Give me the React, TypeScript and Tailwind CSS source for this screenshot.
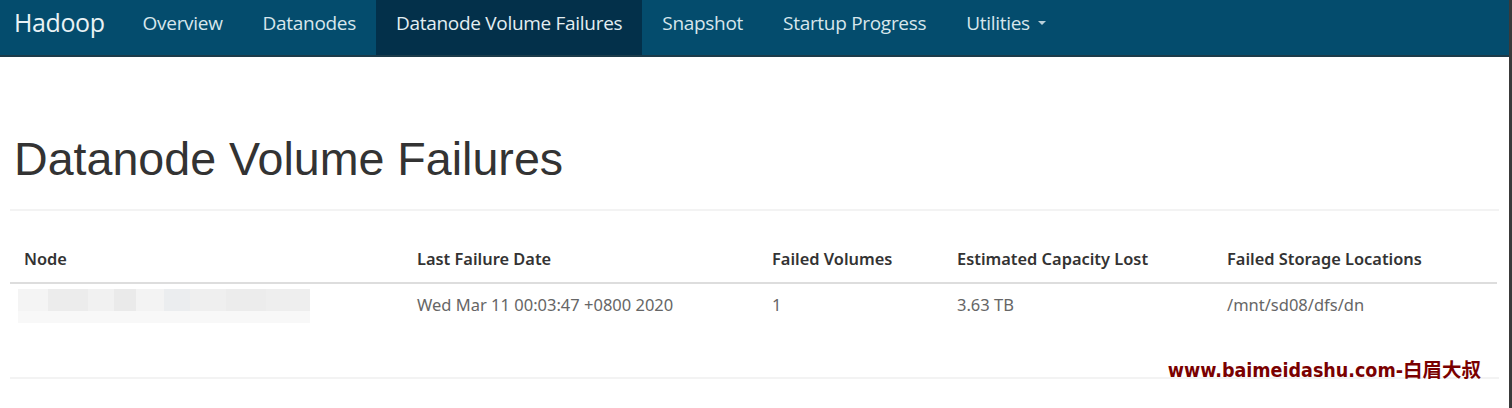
export default function App() {
  const navItems = ["Overview", "Datanodes", "Datanode Volume Failures", "Snapshot", "Startup Progress"];
  const blur = [
    "bg-[#f4f4f4] w-[30px]",
    "bg-[#ececec] w-[40px]",
    "bg-[#f1f1f1] w-[26px]",
    "bg-[#eaeaea] w-[22px]",
    "bg-[#f3f3f3] w-[28px]",
    "bg-[#ebedef] w-[26px]",
    "bg-[#efefef] w-[36px]",
    "bg-[#ececec] w-[40px]",
    "bg-[#eeeeee] w-[44px]",
  ];
  return (
    <div className="w-[1512px] h-[408px] overflow-hidden bg-white flex font-['Open_Sans',sans-serif]">
      <div className="flex-1 flex flex-col">
        <nav className="h-[57px] bg-[#044c6d] border-b-2 border-[#1c3b4a] flex items-stretch">
          <div className="pl-[14px] pr-[18px] pb-[9px] flex items-center text-[25px] text-[#e9f2f5] tracking-[-0.4px]">Hadoop</div>
          <ul className="flex items-stretch">
            {navItems.map((n) => (
              <li
                key={n}
                className={
                  n === "Datanode Volume Failures"
                    ? "px-[20px] pb-[9px] flex items-center text-[19px] text-[#e4eef2] bg-[#03304a] tracking-[-0.3px]"
                    : "px-[20px] pb-[9px] flex items-center text-[19px] text-[#d7e6ec] tracking-[-0.3px]"
                }
              >
                {n}
              </li>
            ))}
            <li className="px-[20px] pb-[9px] flex items-center text-[19px] text-[#d7e6ec] tracking-[-0.3px]">
              Utilities
              <span className="ml-[8px] w-0 h-0 border-x-[4px] border-x-transparent border-t-[4px] border-t-[#b9cfd9]"></span>
            </li>
          </ul>
        </nav>
        <div className="px-[10px]">
          <div className="pt-[74px] pb-[22px] border-b-2 border-[#f3f3f3]">
            <h1 className="pl-[4px] text-[46.6px] leading-[56px] text-[#333] font-['Liberation_Sans',sans-serif]">
              Datanode Volume Failures
            </h1>
          </div>
          <table className="mt-[32px] w-[1487px] text-[16.5px] text-[#666] font-['Noto_Sans',sans-serif]">
            <thead>
              <tr className="border-b-2 border-[#dddddd] text-left">
                <th className="pl-[14px] pb-[10px] pt-[4px] w-[407px] text-[16.4px] font-semibold text-[#333]">Node</th>
                <th className="pb-[10px] pt-[4px] w-[355px] text-[16.4px] font-semibold text-[#333]">Last Failure Date</th>
                <th className="pb-[10px] pt-[4px] w-[185px] text-[16.4px] font-semibold text-[#333]">Failed Volumes</th>
                <th className="pb-[10px] pt-[4px] w-[270px] text-[16.4px] font-semibold text-[#333]">Estimated Capacity Lost</th>
                <th className="pb-[10px] pt-[4px] text-[16.4px] font-semibold text-[#333]">Failed Storage Locations</th>
              </tr>
            </thead>
            <tbody>
              <tr>
                <td className="pl-[8px] py-[5px]">
                  <div className="flex h-[34px] w-[292px] flex-col">
                    <div className="flex h-[22px]">
                      {blur.map((b, i) => (
                        <div key={i} className={b}></div>
                      ))}
                    </div>
                    <div className="h-[12px] bg-[#f8f8f8]"></div>
                  </div>
                </td>
                <td className="py-[5px]">Wed Mar 11 00:03:47 +0800 2020</td>
                <td className="py-[5px]">1</td>
                <td className="py-[5px]">3.63 TB</td>
                <td className="py-[5px]">/mnt/sd08/dfs/dn</td>
              </tr>
            </tbody>
          </table>
        </div>
        <div className="mt-[49px] mx-[10px] border-b-2 border-[#f3f3f3] relative">
          <span className="absolute right-[18px] -top-[16px] text-[19.5px] font-bold text-[#7a0000] font-['DejaVu_Sans_Condensed','DejaVu_Sans','Noto_Sans_CJK_SC',sans-serif] leading-none">
            www.baimeidashu.com-白眉大叔
          </span>
        </div>
      </div>
      <div className="w-[3px] bg-[#3a3a3a]"></div>
    </div>
  );
}
